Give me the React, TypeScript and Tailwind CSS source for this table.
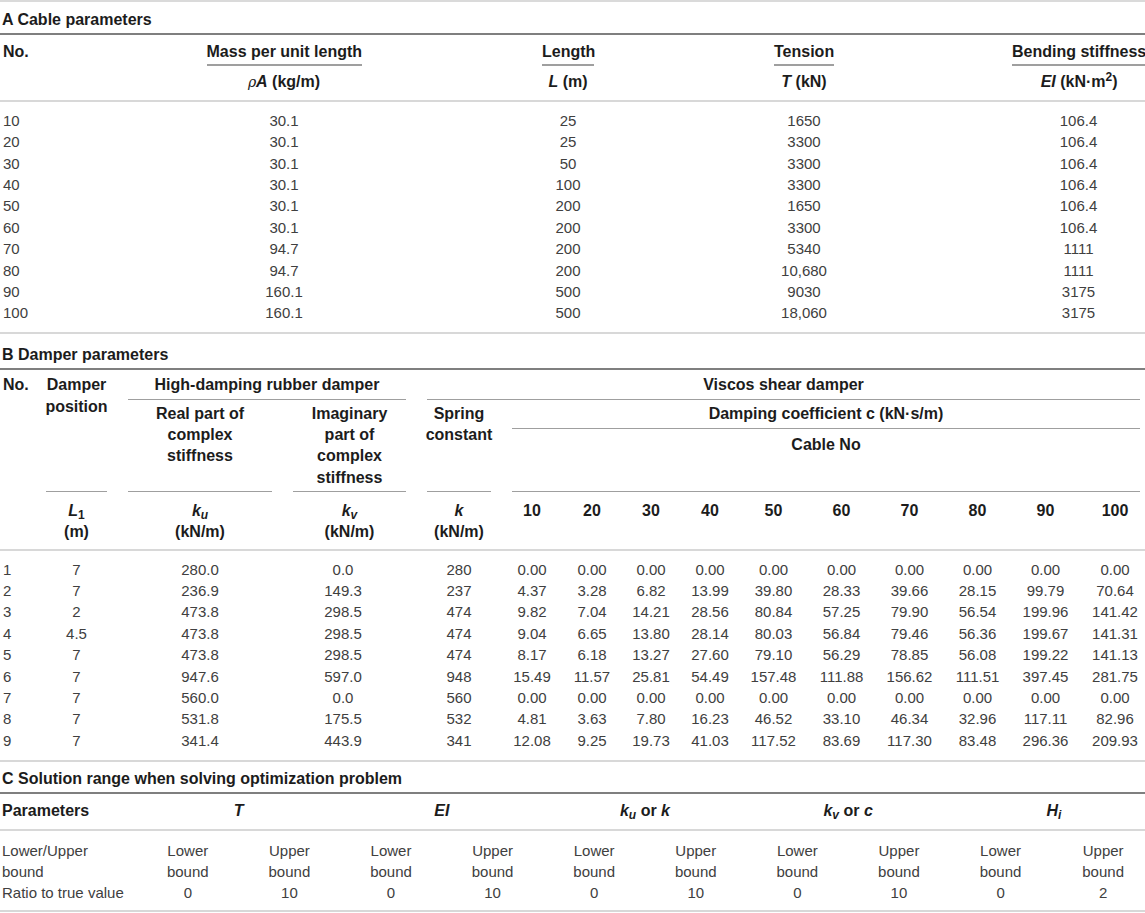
import React from 'react';

const cableRows: string[][] = [
  ['10', '30.1', '25', '1650', '106.4'],
  ['20', '30.1', '25', '3300', '106.4'],
  ['30', '30.1', '50', '3300', '106.4'],
  ['40', '30.1', '100', '3300', '106.4'],
  ['50', '30.1', '200', '1650', '106.4'],
  ['60', '30.1', '200', '3300', '106.4'],
  ['70', '94.7', '200', '5340', '1111'],
  ['80', '94.7', '200', '10,680', '1111'],
  ['90', '160.1', '500', '9030', '3175'],
  ['100', '160.1', '500', '18,060', '3175'],
];

const zeros = ['0.00', '0.00', '0.00', '0.00', '0.00', '0.00', '0.00', '0.00', '0.00', '0.00'];

const damperRows: string[][] = [
  ['1', '7', '280.0', '0.0', '280', ...zeros],
  ['2', '7', '236.9', '149.3', '237', '4.37', '3.28', '6.82', '13.99', '39.80', '28.33', '39.66', '28.15', '99.79', '70.64'],
  ['3', '2', '473.8', '298.5', '474', '9.82', '7.04', '14.21', '28.56', '80.84', '57.25', '79.90', '56.54', '199.96', '141.42'],
  ['4', '4.5', '473.8', '298.5', '474', '9.04', '6.65', '13.80', '28.14', '80.03', '56.84', '79.46', '56.36', '199.67', '141.31'],
  ['5', '7', '473.8', '298.5', '474', '8.17', '6.18', '13.27', '27.60', '79.10', '56.29', '78.85', '56.08', '199.22', '141.13'],
  ['6', '7', '947.6', '597.0', '948', '15.49', '11.57', '25.81', '54.49', '157.48', '111.88', '156.62', '111.51', '397.45', '281.75'],
  ['7', '7', '560.0', '0.0', '560', ...zeros],
  ['8', '7', '531.8', '175.5', '532', '4.81', '3.63', '7.80', '16.23', '46.52', '33.10', '46.34', '32.96', '117.11', '82.96'],
  ['9', '7', '341.4', '443.9', '341', '12.08', '9.25', '19.73', '41.03', '117.52', '83.69', '117.30', '83.48', '296.36', '209.93'],
];

const cableNos = ['10', '20', '30', '40', '50', '60', '70', '80', '90', '100'];
const ratios = ['0', '10', '0', '10', '0', '10', '0', '10', '0', '2'];

// column templates shared by header and body
const A_COLS = 'grid grid-cols-[140px_288px_280px_192px_1fr]';
const B_COLS =
  'grid grid-cols-[25px_61px_144px_113px_64px_40px_38px_38px_38px_47px_47px_47px_47px_47px_50px] gap-x-[21px]';
const C_COLS = 'grid grid-cols-[137px_repeat(9,101.6px)_93.6px]';

const head = 'font-bold text-[16px] text-[#1c1c1c]';
const rule = 'border-[#9f9f9f]';

const SectionTitle: React.FC<{ children: React.ReactNode; className: string }> = ({ children, className }) => (
  <div className={`${className} pb-[2.5px] pl-[2px] border-b-2 border-[#7f7f7f] ${head}`}>{children}</div>
);

const Rho = () => <span className="italic font-normal font-['DejaVu_Serif',serif] text-[14px]">ρ</span>;

const App: React.FC = () => {
  return (
    <div className="w-[1145px] h-[913px] overflow-hidden bg-white font-['Liberation_Sans',Arial,sans-serif] text-[15px] leading-[21.4px] text-[#404040]">
      <div className="h-[2px] bg-[#dadada]" />

      {/* A */}
      <SectionTitle className="pt-[7px]">A Cable parameters</SectionTitle>
      <div className={`${A_COLS} gap-y-[5px] pt-[6px] pb-[6.5px] border-b-2 border-[#d8d8d8] ${head}`}>
        <div className="pl-[3px]">No.</div>
        <div className="flex justify-center">
          <span className={`w-[155px] text-center whitespace-nowrap pb-[1.5px] border-b-2 ${rule}`}>Mass per unit length</span>
        </div>
        <div className="flex justify-center">
          <span className={`w-[52px] text-center pb-[1.5px] border-b-2 ${rule}`}>Length</span>
        </div>
        <div className="flex justify-center">
          <span className={`w-[60px] text-center pb-[1.5px] border-b-2 ${rule}`}>Tension</span>
        </div>
        <div className="pl-[112px]">
          <span className={`block text-center whitespace-nowrap pb-[1.5px] border-b-2 ${rule}`}>Bending stiffness</span>
        </div>
        <div />
        <div className="text-center">
          <Rho />
          <i>A</i> (kg/m)
        </div>
        <div className="text-center">
          <i>L</i> (m)
        </div>
        <div className="text-center">
          <i>T</i> (kN)
        </div>
        <div className="pl-[112px] text-center">
          <i>EI</i> (kN·m<sup>2</sup>)
        </div>
      </div>
      <div className={`${A_COLS} pt-[8px] pb-[8.5px] border-b-2 border-[#d8d8d8]`}>
        {cableRows.map((row) =>
          row.map((cell, i) => (
            <div
              key={`${row[0]}-${i}`}
              className={i === 0 ? 'pl-[3px]' : i === 4 ? 'pl-[112px] text-center' : 'text-center'}
            >
              {cell}
            </div>
          ))
        )}
      </div>

      {/* B */}
      <SectionTitle className="pt-[9.5px]">B Damper parameters</SectionTitle>
      <div className={`${B_COLS} ${head} text-center`}>
        <div className="col-start-1 row-start-1 row-span-2 pt-[4.5px] pl-[3px] text-left whitespace-nowrap">No.</div>
        <div className={`col-start-2 row-start-1 row-span-2 pt-[4.5px] border-b-[1.5px] ${rule}`}>
          Damper
          <br />
          <span className="-mx-[3px] block">position</span>
        </div>
        <div className={`col-start-3 col-span-2 row-start-1 pt-[4.5px] pb-[3px] border-b-[1.5px] ${rule}`}>
          High-damping rubber damper
        </div>
        <div className={`col-start-5 col-span-11 row-start-1 pt-[4.5px] pb-[3px] border-b-[1.5px] ${rule}`}>
          Viscos shear damper
        </div>
        <div className={`col-start-3 row-start-2 pt-[3px] border-b-[1.5px] ${rule}`}>
          Real part of
          <br />
          complex
          <br />
          stiffness
        </div>
        <div className={`col-start-4 row-start-2 pt-[3px] pb-[3px] border-b-[1.5px] ${rule}`}>
          Imaginary
          <br />
          part of
          <br />
          complex
          <br />
          stiffness
        </div>
        <div className={`col-start-5 row-start-2 pt-[3px] border-b-[1.5px] ${rule}`}>
          Spring
          <br />
          <span className="-mx-[3px] block">constant</span>
        </div>
        <div className={`col-start-6 col-span-10 row-start-2 pt-[3px] border-b-[1.5px] ${rule}`}>
          <div className={`pb-[4px] border-b-[1.5px] ${rule}`}>Damping coefficient c (kN·s/m)</div>
          <div className="pt-[4.7px]">Cable No</div>
        </div>
      </div>
      <div className={`${B_COLS} ${head} text-center pt-[7.5px] pb-[6px] border-b-2 border-[#d8d8d8]`}>
        <div />
        <div>
          <i>L</i>
          <sub className="not-italic">1</sub>
          <br />
          (m)
        </div>
        <div>
          <i>
            k<sub>u</sub>
          </i>
          <br />
          (kN/m)
        </div>
        <div>
          <i>
            k<sub>v</sub>
          </i>
          <br />
          (kN/m)
        </div>
        <div>
          <i>k</i>
          <br />
          <span className="-mx-[3px] block">(kN/m)</span>
        </div>
        {cableNos.map((n) => (
          <div key={n}>{n}</div>
        ))}
      </div>
      <div className={`${B_COLS} pt-[8px] pb-[8.5px] border-b-2 border-[#d8d8d8]`}>
        {damperRows.map((row) =>
          row.map((cell, i) => (
            <div
              key={`${row[0]}-${i}`}
              className={i === 0 ? 'pl-[3px]' : i === 3 ? 'text-center pr-[13px]' : 'text-center whitespace-nowrap'}
            >
              {cell}
            </div>
          ))
        )}
      </div>

      {/* C */}
      <SectionTitle className="pt-[6.5px]">C Solution range when solving optimization problem</SectionTitle>
      <div className={`${C_COLS} ${head} text-center pt-[5.5px] pb-[7.5px] border-b-2 border-[#d8d8d8]`}>
        <div className="pl-[2px] text-left">Parameters</div>
        <div className="col-span-2">
          <i>T</i>
        </div>
        <div className="col-span-2">
          <i>EI</i>
        </div>
        <div className="col-span-2">
          <i>
            k<sub>u</sub>
          </i>{' '}
          or <i>k</i>
        </div>
        <div className="col-span-2">
          <i>
            k<sub>v</sub>
          </i>{' '}
          or <i>c</i>
        </div>
        <div className="col-span-2 pl-[13px]">
          <i>
            H<sub>i</sub>
          </i>
        </div>
      </div>
      <div className={`${C_COLS} text-center pt-[9px] pb-[6.5px] border-b-2 border-[#d8d8d8]`}>
        <div className="pl-[2px] text-left">
          Lower/Upper
          <br />
          bound
        </div>
        {ratios.map((_, i) => (
          <div key={`lb-${i}`} className={i === 9 ? 'pl-[10px]' : ''}>
            {i % 2 === 0 ? 'Lower' : 'Upper'}
            <br />
            bound
          </div>
        ))}
        <div className="pl-[2px] text-left whitespace-nowrap">Ratio to true value</div>
        {ratios.map((r, i) => (
          <div key={`r-${i}`} className={i === 9 ? 'pl-[10px]' : ''}>
            {r}
          </div>
        ))}
      </div>
    </div>
  );
};

export default App;
